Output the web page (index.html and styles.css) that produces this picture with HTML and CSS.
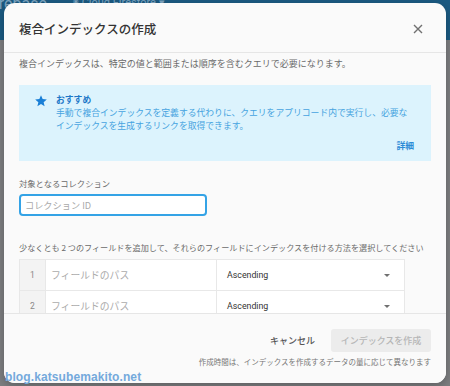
FILE: index.html
```html
<!DOCTYPE html>
<html lang="ja">
<head>
<meta charset="utf-8">
<title>複合インデックスの作成</title>
<link rel="stylesheet" href="styles.css">
</head>
<body>
<div class="page">
  <div class="topbar">
    <span class="brand">Firebase</span>
    <span class="crumb">◉ Cloud Firestore ▾</span>
  </div>
</div>

<div class="dialog">
  <div class="dlg-head">
    <h1 class="title">複合インデックスの作成</h1>
    <svg class="close" viewBox="0 0 10 10" width="10" height="10"><path d="M1 1L9 9M9 1L1 9" stroke="#707070" stroke-width="1.4" fill="none"/></svg>
  </div>

  <div class="dlg-body">
    <p class="desc">複合インデックスは、特定の値と範囲または順序を含むクエリで必要になります。</p>

    <div class="tip">
      <svg class="star" viewBox="0 0 24 24" width="14" height="14"><path d="M12 17.27L18.18 21l-1.64-7.03L22 9.24l-7.19-.61L12 2 9.19 8.63 2 9.24l5.46 4.73L5.82 21z" fill="#1a7fd6"/></svg>
      <div class="tip-text">
        <div class="tip-title">おすすめ</div>
        <div class="tip-body">手動で複合インデックスを定義する代わりに、クエリをアプリコード内で実行し、必要な<br>インデックスを生成するリンクを取得できます。</div>
        <div class="tip-link">詳細</div>
      </div>
    </div>

    <div class="label label-coll">対象となるコレクション</div>
    <div class="input"><span class="ph">コレクション ID</span></div>

    <div class="label label-fields">少なくとも 2 つのフィールドを追加して、それらのフィールドにインデックスを付ける方法を選択してください</div>

    <div class="fields">
      <div class="row">
        <div class="num">1</div>
        <div class="path">フィールドのパス</div>
        <div class="order"><span>Ascending</span><span class="caret"></span></div>
      </div>
      <div class="row">
        <div class="num">2</div>
        <div class="path">フィールドのパス</div>
        <div class="order"><span>Ascending</span><span class="caret"></span></div>
      </div>
    </div>
  </div>

  <div class="dlg-foot">
    <div class="actions">
      <span class="btn-text">キャンセル</span>
      <span class="btn-primary">インデックスを作成</span>
    </div>
    <div class="note">作成時間は、インデックスを作成するデータの量に応じて異なります</div>
  </div>
</div>

<div class="watermark">blog.katsubemakito.net</div>
</body>
</html>
```

FILE: styles.css
```css
* { box-sizing: border-box; margin: 0; padding: 0; }

html, body { width: 450px; height: 386px; overflow: hidden; }

body {
  background: #7d7e80;
  font-family: "Noto Sans CJK JP", "Noto Sans", sans-serif;
  position: relative;
}

.page { width: 100%; height: 100%; }

.topbar {
  height: 40px;
  background: #1b5a82;
  color: #7ea5c0;
  display: flex;
  gap: 26px;
  font-family: Roboto, "Liberation Sans", sans-serif;
  font-size: 16px;
  line-height: 8px;
}
.brand { margin-left: -14px; }
.crumb { font-size: 11px; line-height: 6px; }

.dialog {
  position: absolute;
  left: 4px;
  top: 3px;
  width: 442px;
  height: 380px;
  background: #fafafa;
  border-radius: 11px;
  display: flex;
  flex-direction: column;
  overflow: hidden;
  box-shadow: 0 3px 10px rgba(0, 0, 0, 0.25);
}

.dlg-head {
  flex: none;
  height: 50px;
  border-bottom: 1px solid #e6e6e6;
  display: flex;
  align-items: center;
  justify-content: space-between;
  padding: 3px 23px 0 15px;
}

.title {
  font-size: 12.5px;
  font-weight: 500;
  color: #333;
  line-height: 16px;
}

.close { display: block; }

.dlg-body {
  flex: 1;
  overflow: hidden;
  padding: 4px 15px 0;
}

.desc {
  font-size: 9px;
  line-height: 14px;
  color: #6a6a6a;
}

.tip {
  margin-top: 14px;
  height: 76px;
  background: #dcf3fd;
  display: flex;
  padding: 8px 17px 0 15px;
}

.star { flex: none; margin-top: 0.5px; }

.tip-text {
  flex: 1;
  margin-left: 8px;
  font-size: 8.8px;
  line-height: 13px;
}
.tip-title { font-weight: 700; color: #1e78c8; }
.tip-body { color: #46a3e0; }
.tip-link {
  margin-top: 7px;
  text-align: right;
  font-weight: 700;
  color: #2c8bd6;
}

.label {
  font-size: 8.3px;
  line-height: 14px;
  color: #6b6b6b;
}
.label-coll { margin-top: 15px; }
.label-fields { margin-top: 25px; white-space: nowrap; font-size: 8.15px; }

.input {
  margin-top: 4px;
  width: 188px;
  height: 22px;
  border: 2px solid #34a3e6;
  border-radius: 4px;
  background: #fff;
  display: flex;
  align-items: center;
  padding-left: 4px;
}
.ph { font-size: 9.2px; color: #a9a9a9; }

.fields {
  margin-top: 4px;
  width: 386px;
  border: 1px solid #e8e8e8;
  border-bottom: none;
}

.row {
  display: flex;
  height: 31px;
  border-bottom: 1px solid #e8e8e8;
}

.num {
  width: 26px;
  background: #f3f3f3;
  border-right: 1px solid #e8e8e8;
  display: flex;
  align-items: center;
  justify-content: center;
  font-family: Roboto, "Liberation Sans", sans-serif;
  font-size: 8.5px;
  color: #888;
}

.path {
  width: 171px;
  background: #fff;
  border-right: 1px solid #e8e8e8;
  display: flex;
  align-items: center;
  padding-left: 5px;
  font-size: 9.8px;
  color: #ababab;
}

.order {
  flex: 1;
  background: #fff;
  display: flex;
  align-items: center;
  justify-content: space-between;
  padding: 0 14px 0 10px;
  font-family: Roboto, "Liberation Sans", sans-serif;
  font-size: 8.8px;
  color: #333;
}

.caret {
  width: 0;
  height: 0;
  border-left: 3px solid transparent;
  border-right: 3px solid transparent;
  border-top: 3px solid #707070;
}

.dlg-foot {
  flex: none;
  height: 70px;
  border-top: 1px solid #e6e6e6;
  background: #fafafa;
  display: flex;
  flex-direction: column;
  align-items: flex-end;
  padding: 15px 15px 0;
}

.actions {
  display: flex;
  align-items: center;
}

.btn-text {
  font-size: 9px;
  font-weight: 500;
  color: #555;
  padding-right: 16px;
}

.btn-primary {
  width: 100px;
  height: 23px;
  border-radius: 3px;
  background: #ececec;
  color: #b6b6b6;
  font-size: 9px;
  font-weight: 500;
  display: flex;
  align-items: center;
  justify-content: center;
}

.note {
  margin-top: 4px;
  font-size: 7.5px;
  line-height: 11px;
  color: #767676;
}

.watermark {
  position: absolute;
  left: 5px;
  top: 370px;
  font-family: "Liberation Sans", Arial, sans-serif;
  font-weight: 700;
  font-size: 12px;
  line-height: 14px;
  letter-spacing: 0.1px;
  color: #74a9dc;
}
```
